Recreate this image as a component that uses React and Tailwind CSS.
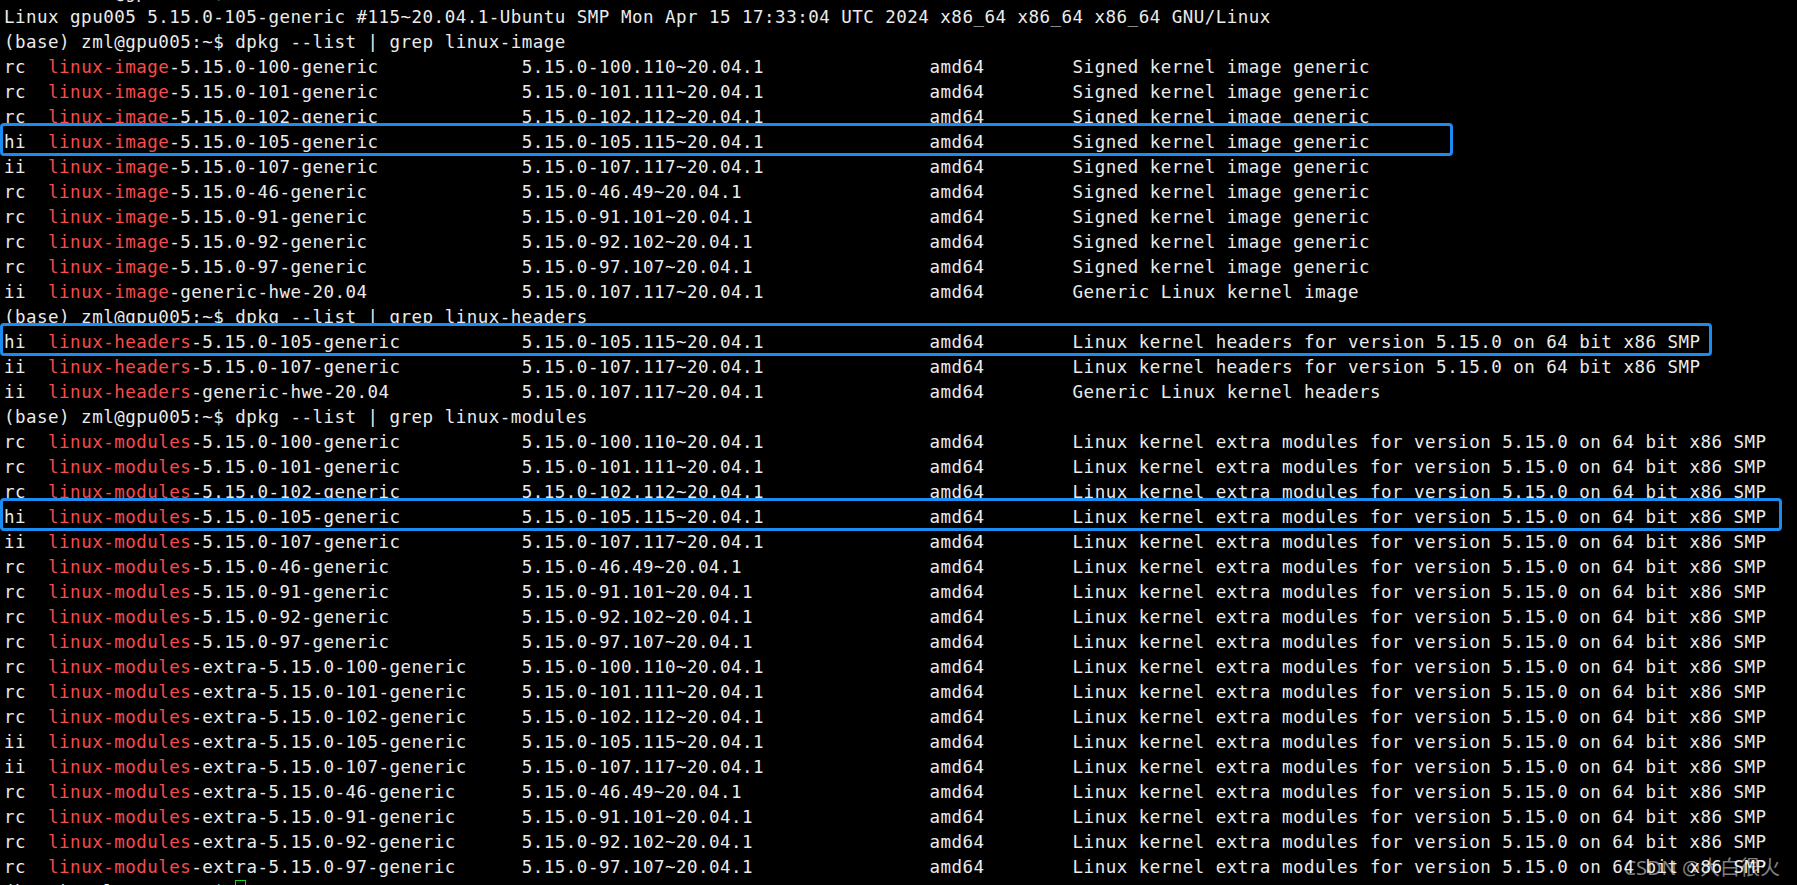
const img = [
  ["rc", "linux-image", "-5.15.0-100-generic", "5.15.0-100.110~20.04.1", "Signed kernel image generic"],
  ["rc", "linux-image", "-5.15.0-101-generic", "5.15.0-101.111~20.04.1", "Signed kernel image generic"],
  ["rc", "linux-image", "-5.15.0-102-generic", "5.15.0-102.112~20.04.1", "Signed kernel image generic"],
  ["hi", "linux-image", "-5.15.0-105-generic", "5.15.0-105.115~20.04.1", "Signed kernel image generic", "w-[1453px]"],
  ["ii", "linux-image", "-5.15.0-107-generic", "5.15.0-107.117~20.04.1", "Signed kernel image generic"],
  ["rc", "linux-image", "-5.15.0-46-generic", "5.15.0-46.49~20.04.1", "Signed kernel image generic"],
  ["rc", "linux-image", "-5.15.0-91-generic", "5.15.0-91.101~20.04.1", "Signed kernel image generic"],
  ["rc", "linux-image", "-5.15.0-92-generic", "5.15.0-92.102~20.04.1", "Signed kernel image generic"],
  ["rc", "linux-image", "-5.15.0-97-generic", "5.15.0-97.107~20.04.1", "Signed kernel image generic"],
  ["ii", "linux-image", "-generic-hwe-20.04", "5.15.0.107.117~20.04.1", "Generic Linux kernel image"],
];

const hdrDesc = "Linux kernel headers for version 5.15.0 on 64 bit x86 SMP";
const hdr = [
  ["hi", "linux-headers", "-5.15.0-105-generic", "5.15.0-105.115~20.04.1", hdrDesc, "w-[1712px]"],
  ["ii", "linux-headers", "-5.15.0-107-generic", "5.15.0-107.117~20.04.1", hdrDesc],
  ["ii", "linux-headers", "-generic-hwe-20.04", "5.15.0.107.117~20.04.1", "Generic Linux kernel headers"],
];

const modDesc = "Linux kernel extra modules for version 5.15.0 on 64 bit x86 SMP";
const mods = [
  ["rc", "-5.15.0-100-generic", "5.15.0-100.110~20.04.1"],
  ["rc", "-5.15.0-101-generic", "5.15.0-101.111~20.04.1"],
  ["rc", "-5.15.0-102-generic", "5.15.0-102.112~20.04.1"],
  ["hi", "-5.15.0-105-generic", "5.15.0-105.115~20.04.1", "w-[1782px]"],
  ["ii", "-5.15.0-107-generic", "5.15.0-107.117~20.04.1"],
  ["rc", "-5.15.0-46-generic", "5.15.0-46.49~20.04.1"],
  ["rc", "-5.15.0-91-generic", "5.15.0-91.101~20.04.1"],
  ["rc", "-5.15.0-92-generic", "5.15.0-92.102~20.04.1"],
  ["rc", "-5.15.0-97-generic", "5.15.0-97.107~20.04.1"],
  ["rc", "-extra-5.15.0-100-generic", "5.15.0-100.110~20.04.1"],
  ["rc", "-extra-5.15.0-101-generic", "5.15.0-101.111~20.04.1"],
  ["rc", "-extra-5.15.0-102-generic", "5.15.0-102.112~20.04.1"],
  ["ii", "-extra-5.15.0-105-generic", "5.15.0-105.115~20.04.1"],
  ["ii", "-extra-5.15.0-107-generic", "5.15.0-107.117~20.04.1"],
  ["rc", "-extra-5.15.0-46-generic", "5.15.0-46.49~20.04.1"],
  ["rc", "-extra-5.15.0-91-generic", "5.15.0-91.101~20.04.1"],
  ["rc", "-extra-5.15.0-92-generic", "5.15.0-92.102~20.04.1"],
  ["rc", "-extra-5.15.0-97-generic", "5.15.0-97.107~20.04.1"],
].map(([s, rest, ver, box]) => [s, "linux-modules", rest, ver, modDesc, box]);

function Line({ children }) {
  return <div className="h-[25px] leading-[25px] px-[4px] whitespace-pre">{children}</div>;
}

function Pkg({ row }) {
  const [st, match, rest, ver, desc, box] = row;
  const name = (match + rest).padEnd(43, " ");
  const line = (
    <>
      {st + "  "}
      <span className="text-[#f84b4b]">{match}</span>
      {name.slice(match.length)}
      {ver.padEnd(37, " ")}
      {"amd64".padEnd(13, " ")}
      {desc}
    </>
  );
  if (!box) return <Line>{line}</Line>;
  return (
    <div className="relative h-[25px] leading-[25px] px-[4px] whitespace-pre">
      <div className={`absolute left-0 -top-[7px] h-[33px] ${box} border-[3px] border-[#1b8df2] rounded-[4px] bg-black`} />
      <span className="relative">{line}</span>
    </div>
  );
}

export default function App() {
  return (
    <div className="relative w-full h-[885px] overflow-hidden bg-black text-[#ebebeb] font-['DejaVu_Sans_Mono',monospace] text-[17.5px] tracking-[0.48px]">
      <div className="-mt-[20px]">
        <Line>(base) zml@gpu005:~$ uname -a</Line>
        <Line>Linux gpu005 5.15.0-105-generic #115~20.04.1-Ubuntu SMP Mon Apr 15 17:33:04 UTC 2024 x86_64 x86_64 x86_64 GNU/Linux</Line>
        <Line>(base) zml@gpu005:~$ dpkg --list | grep linux-image</Line>
        {img.map((r, i) => <Pkg key={"i" + i} row={r} />)}
        <Line>(base) zml@gpu005:~$ dpkg --list | grep linux-headers</Line>
        {hdr.map((r, i) => <Pkg key={"h" + i} row={r} />)}
        <Line>(base) zml@gpu005:~$ dpkg --list | grep linux-modules</Line>
        {mods.map((r, i) => <Pkg key={"m" + i} row={r} />)}
        <Line>
          {"(base) zml@gpu005:~$ "}
          <span className="inline-block w-[11px] h-[24px] align-top border border-[#19d919]" />
        </Line>
      </div>
      <div className="absolute right-[17px] bottom-[7px] text-[20px] leading-none tracking-normal text-white/50 font-['Noto_Sans','Noto_Sans_CJK_SC',sans-serif]">
        CSDN @大白很火
      </div>
    </div>
  );
}
